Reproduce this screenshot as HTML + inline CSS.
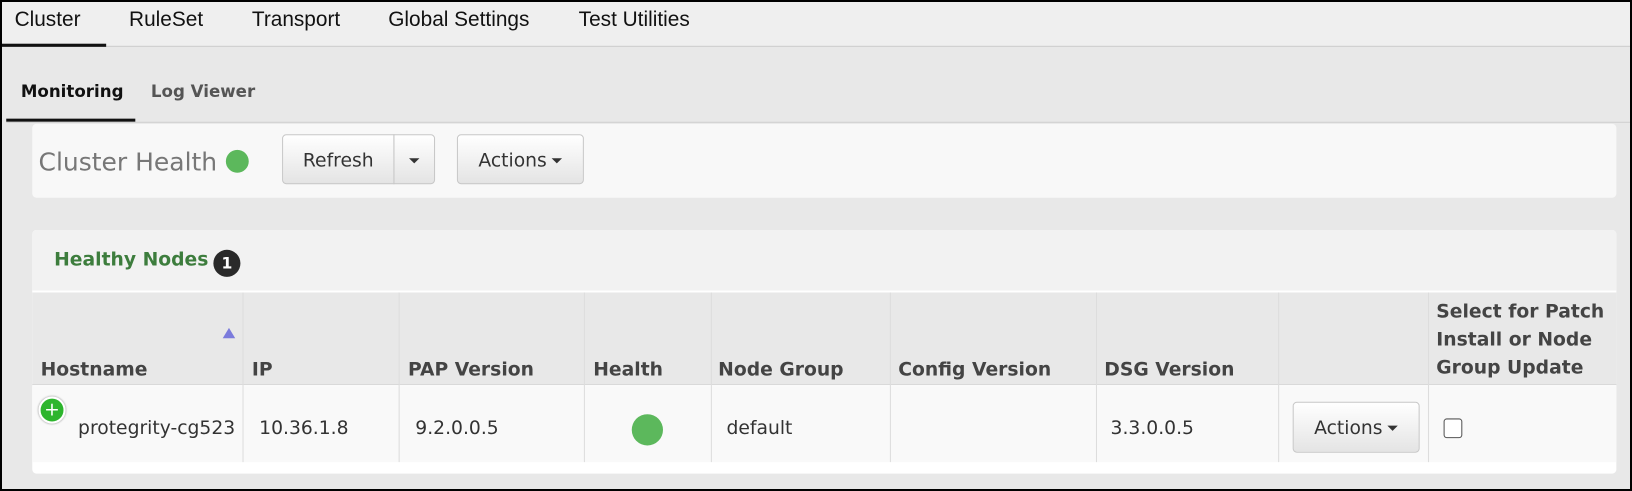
<!DOCTYPE html>
<html><head><meta charset="utf-8"><style>
*{box-sizing:border-box;margin:0;padding:0}
body{width:1632px;height:491px;background:#e8e8e8;font-family:"DejaVu Sans","Liberation Sans",sans-serif;position:relative;overflow:hidden}
.wrap{position:absolute;left:0;top:0;width:1568px;height:472px;transform:scale(1.0408);transform-origin:0 0}
.frame{position:absolute;left:0;top:0;width:1632px;height:491px;border:2px solid #000;pointer-events:none}
.abs{position:absolute}
.top{left:0;top:0;width:1568px;height:45px;background:#efefef;border-bottom:1px solid #ccc}
.top span{position:absolute;top:8px;font:20px "Liberation Sans",sans-serif;color:#111}
.sub span{position:absolute;top:78px;font-weight:bold;font-size:16px}
.panel{background:#f8f8f8;border-radius:4px;left:31px;width:1522px}
.btn{position:absolute;border:1px solid #c8c8c8;border-radius:4px;background:linear-gradient(#fff,#e4e4e4);color:#333;font-size:18px;display:flex;align-items:center;justify-content:center;padding-top:2px}
.caret{display:inline-block;border-left:5px solid transparent;border-right:5px solid transparent;border-top:5px solid #333;margin-left:5px}
.hd{position:absolute;font-weight:bold;font-size:18px;color:#444}
.vl{position:absolute;top:60px;width:1px;height:163px;background:#ddd}
.cell{position:absolute;top:180px;font-size:18px;color:#333}
</style></head><body>
<div class="wrap">
<div class="abs top">
<span style="left:14px">Cluster</span><span style="left:124px">RuleSet</span><span style="left:242px">Transport</span><span style="left:373px">Global Settings</span><span style="left:556px">Test Utilities</span>
</div>
<div class="abs" style="left:0;top:42px;width:102px;height:3px;background:#111"></div>
<div class="sub"><span style="left:20px;color:#111">Monitoring</span><span style="left:145px;color:#555">Log Viewer</span></div>
<div class="abs" style="left:6px;top:114px;width:124px;height:3px;background:#111"></div>
<div class="abs" style="left:6px;top:117px;width:1562px;height:1px;background:#d0d0d0"></div>
<div class="abs panel" style="top:119px;height:71px">
 <div class="abs" style="left:6px;top:23px;font-size:24px;color:#777">Cluster Health</div>
 <div class="abs" style="left:186px;top:25px;width:22px;height:22px;border-radius:50%;background:#5cb85c"></div>
 <div class="btn" style="left:240px;top:10px;width:108px;height:48px;border-radius:4px 0 0 4px">Refresh</div>
 <div class="btn" style="left:347px;top:10px;width:40px;height:48px;border-radius:0 4px 4px 0"><span class="caret" style="margin:0"></span></div>
 <div class="btn" style="left:408px;top:10px;width:122px;height:48px">Actions<span class="caret"></span></div>
</div>
<div class="abs panel" style="top:221px;height:234px;background:#fff">
 <div class="abs" style="left:0;top:0;width:1522px;height:59px;background:#f2f2f2;border-radius:4px 4px 0 0;border-bottom:1px solid #fff"></div>
 <div class="abs" style="left:21px;top:18px;font-weight:bold;font-size:18px;color:#3d7d3d">Healthy Nodes</div>
 <div class="abs" style="left:174px;top:19px;width:26px;height:26px;border-radius:13px;background:#2a2a2a;color:#fff;font-weight:bold;font-size:15px;text-align:center;line-height:26px">1</div>
 <div class="abs" style="left:0;top:60px;width:1522px;height:89px;background:#e8e8e8;border-bottom:1px solid #d8d8d8"></div>
 <div class="abs" style="left:0;top:150px;width:1522px;height:73px;background:#f9f9f9"></div>
 <div class="vl" style="left:202px"></div><div class="vl" style="left:352px"></div><div class="vl" style="left:530px"></div><div class="vl" style="left:652px"></div><div class="vl" style="left:824px"></div><div class="vl" style="left:1022px"></div><div class="vl" style="left:1197px"></div><div class="vl" style="left:1341px"></div>
 <div class="abs" style="left:183px;top:94px;border-left:6px solid transparent;border-right:6px solid transparent;border-bottom:10px solid #7b7bdc"></div>
 <div class="hd" style="left:8px;top:124px">Hostname</div>
 <div class="hd" style="left:211px;top:124px">IP</div>
 <div class="hd" style="left:361px;top:124px">PAP Version</div>
 <div class="hd" style="left:539px;top:124px">Health</div>
 <div class="hd" style="left:659px;top:124px">Node Group</div>
 <div class="hd" style="left:832px;top:124px">Config Version</div>
 <div class="hd" style="left:1030px;top:124px">DSG Version</div>
 <div class="hd" style="left:1349px;top:65px;line-height:27px">Select for Patch<br>Install or Node<br>Group Update</div>
 <div class="abs" style="left:6px;top:160px;width:26px;height:26px;border-radius:50%;background:#2db52d;border:2px solid #fff;box-shadow:0 0 2px #888;color:#fff;text-align:center;line-height:21px;font-size:18px">+</div>
 <div class="cell" style="left:44px">protegrity-cg523</div>
 <div class="cell" style="left:218px">10.36.1.8</div>
 <div class="cell" style="left:368px">9.2.0.0.5</div>
 <div class="abs" style="left:576px;top:177px;width:30px;height:30px;border-radius:50%;background:#5cb85c"></div>
 <div class="cell" style="left:667px">default</div>
 <div class="cell" style="left:1036px">3.3.0.0.5</div>
 <div class="btn" style="left:1211px;top:165px;width:122px;height:49px">Actions<span class="caret"></span></div>
 <div class="abs" style="left:1356px;top:181px;width:18px;height:19px;border:1px solid #555;border-radius:3px;background:#fff"></div>
</div>
</div>
<div class="frame"></div>
</body></html>
